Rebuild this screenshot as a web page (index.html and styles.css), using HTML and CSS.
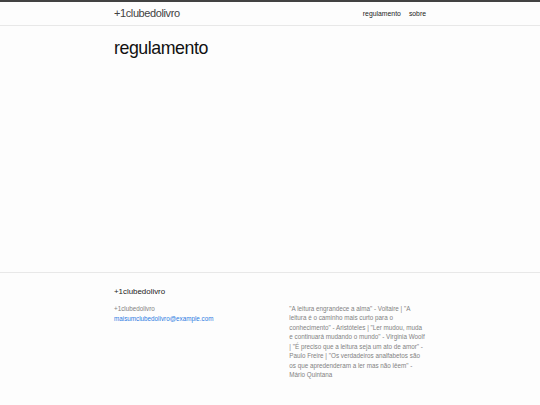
FILE: index.html
```html
<!DOCTYPE html>
<html lang="pt">
<head>
<meta charset="utf-8">
<title>regulamento | +1clubedolivro</title>
<link rel="stylesheet" href="styles.css">
</head>
<body>
<header class="site-header">
  <div class="wrapper header-row">
    <a class="site-title" href="#">+1clubedolivro</a>
    <nav class="site-nav">
      <a class="page-link" href="#">regulamento</a>
      <a class="page-link" href="#">sobre</a>
    </nav>
  </div>
</header>
<main class="page-content">
  <div class="wrapper">
    <h1 class="post-title">regulamento</h1>
  </div>
</main>
<footer class="site-footer">
  <div class="wrapper">
    <h2 class="footer-heading">+1clubedolivro</h2>
    <div class="footer-cols">
      <div class="footer-col col-1">
        <ul class="contact-list">
          <li>+1clubedolivro</li>
          <li><a href="#">maisumclubedolivro@example.com</a></li>
        </ul>
      </div>
      <div class="footer-col col-2"></div>
      <div class="footer-col col-3">
        <p>"A leitura engrandece a alma" - Voltaire | "A leitura é o caminho mais curto para o conhecimento" - Aristóteles | "Ler mudou, muda e continuará mudando o mundo" - Virginia Woolf | "É preciso que a leitura seja um ato de amor" - Paulo Freire | "Os verdadeiros analfabetos são os que apredenderam a ler mas não lêem" - Mário Quintana</p>
      </div>
    </div>
  </div>
</footer>
</body>
</html>
```

FILE: styles.css
```css
html, body {
  margin: 0;
  padding: 0;
}
body {
  background: #fdfdfd;
  color: #111111;
  font-family: "Liberation Sans", Arial, sans-serif;
  font-size: 6.85px;
  line-height: 1.5;
}
a {
  text-decoration: none;
}
.wrapper {
  width: 312px;
  margin: 0 auto;
}
.site-header {
  border-top: 2px solid #424242;
  border-bottom: 1px solid #e8e8e8;
}
.header-row {
  display: flex;
  justify-content: space-between;
  align-items: center;
  height: 23px;
}
.site-title {
  font-size: 11px;
  letter-spacing: -0.4px;
  color: #424242;
  line-height: 23px;
}
.site-nav {
  display: flex;
  gap: 8px;
  line-height: 23px;
}
.page-link {
  color: #222222;
  font-size: 6.85px;
}
.page-content {
  padding-top: 13px;
  height: 233px;
}
.post-title {
  margin: 0;
  font-size: 17.8px;
  font-weight: normal;
  letter-spacing: -0.45px;
  line-height: 1;
  padding-top: 1px;
  color: #111111;
}
.site-footer {
  border-top: 1px solid #e8e8e8;
  padding: 13px 0 14px;
}
.footer-heading {
  margin: 0 0 6px;
  font-size: 7.9px;
  font-weight: normal;
  line-height: 1.5;
  color: #222222;
}
.footer-cols {
  display: flex;
  margin-left: -6.75px;
  font-size: 6.3px;
  color: #828282;
  line-height: 9.5px;
}
.footer-col {
  padding-left: 6.75px;
  box-sizing: border-box;
}
.col-1 { width: 35%; }
.col-2 { width: 20%; }
.col-3 { width: 45%; }
.contact-list {
  list-style: none;
  margin: 0;
  padding: 0;
  line-height: 9.8px;
}
.contact-list a {
  color: #2a7ae2;
}
.col-3 p {
  margin: 0;
}
```
